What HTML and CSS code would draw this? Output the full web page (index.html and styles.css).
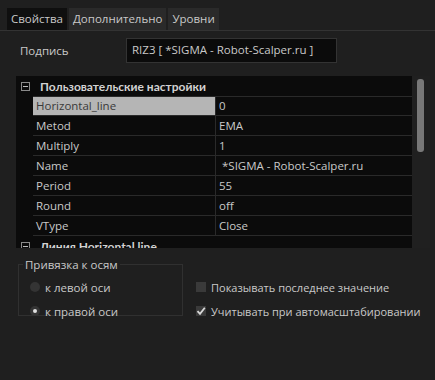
FILE: index.html
```html
<!DOCTYPE html>
<html lang="ru">
<head>
  <meta charset="UTF-8">
  <title>Свойства</title>
  <link rel="stylesheet" href="styles.css">
</head>
<body>
  <div class="tabs">
    <div class="tab active">Свойства</div>
    <div class="tab">Дополнительно</div>
    <div class="tab">Уровни</div>
  </div>

  <div class="caption">
    <label>Подпись</label>
    <div class="field">RIZ3 [ *SIGMA - Robot-Scalper.ru ]</div>
  </div>

  <div class="grid">
    <div class="rows">
      <div class="group"><span class="toggle"></span>Пользовательские настройки</div>
      <div class="row selected"><span class="name">Horizontal_line</span><span class="value">0</span></div>
      <div class="row"><span class="name">Metod</span><span class="value">EMA</span></div>
      <div class="row"><span class="name">Multiply</span><span class="value">1</span></div>
      <div class="row"><span class="name">Name</span><span class="value">&nbsp;*SIGMA - Robot-Scalper.ru</span></div>
      <div class="row"><span class="name">Period</span><span class="value">55</span></div>
      <div class="row"><span class="name">Round</span><span class="value">off</span></div>
      <div class="row"><span class="name">VType</span><span class="value">Close</span></div>
      <div class="group"><span class="toggle"></span>Линия Horizontal line</div>
    </div>
    <div class="scroll"><div class="thumb"></div></div>
  </div>

  <div class="bottom">
    <fieldset class="axes">
      <legend>Привязка к осям</legend>
      <div class="radio"><span class="dot"></span>к левой оси</div>
      <div class="radio"><span class="dot on"></span>к правой оси</div>
    </fieldset>
    <div class="checks">
      <div class="check"><span class="box"></span>Показывать последнее значение</div>
      <div class="check"><span class="box"><svg width="10" height="10" viewBox="0 0 10 10"><path d="M1.5 5.2 L4 7.8 L8.8 1.8" fill="none" stroke="#d8d8d8" stroke-width="1.8"/></svg></span>Учитывать при автомасштабировании</div>
    </div>
  </div>
</body>
</html>
```

FILE: styles.css
```css
body {
  margin: 0;
  width: 435px;
  height: 380px;
  overflow: hidden;
  background: #1f1f1f;
  color: #c9c9c9;
  font-family: 'Open Sans', 'Noto Sans', sans-serif;
  font-size: 11.5px;
}
.tabs {
  display: flex;
  gap: 2px;
  padding: 8px 0 0 7px;
  border-bottom: 1px solid #333;
  height: 22px;
}
.tab {
  height: 22px;
  line-height: 21px;
  padding: 0 4px;
  background: #2a2a2a;
}
.tab.active {
  background: #0f0f0f;
}
.caption {
  display: flex;
  align-items: center;
  padding: 7px 0 0 20px;
}
.caption label {
  width: 106px;
}
.field {
  width: 204px;
  height: 23px;
  line-height: 22px;
  padding-left: 5px;
  background: #0b0b0b;
  border: 1px solid #333;
  white-space: nowrap;
}
.grid {
  display: flex;
  margin: 13px 5px 0 16px;
  height: 172px;
  background: #0b0b0b;
}
.rows {
  flex: 1;
  overflow: hidden;
}
.group {
  display: flex;
  align-items: center;
  height: 20px;
  font-family: Lato, sans-serif;
  font-size: 12px;
  font-weight: bold;
  color: #d2d2d2;
}
.toggle {
  width: 7px;
  height: 7px;
  border: 1px solid #8a8a8a;
  margin: 0 10px 0 5px;
  position: relative;
}
.toggle::after {
  content: '';
  position: absolute;
  left: 1px;
  top: 3px;
  width: 5px;
  height: 1px;
  background: #bbb;
}
.row {
  display: grid;
  grid-template-columns: 183px 1fr;
  box-sizing: border-box;
  height: 20px;
  line-height: 19px;
  margin-left: 17px;
  border-bottom: 1px solid #2a2a2a;
}
.group + .row {
  border-top: 1px solid #2a2a2a;
  line-height: 18px;
}
.name {
  padding-left: 3px;
  border-right: 1px solid #2a2a2a;
}
.value {
  padding-left: 3px;
  white-space: nowrap;
}
.row.selected .name {
  background: #b5b5b5;
  color: #3a3a3a;
}
.scroll {
  width: 18px;
  background: #202020;
  padding-top: 3px;
}
.thumb {
  width: 7px;
  height: 73px;
  margin-left: 5px;
  border-radius: 3px;
  background: #787878;
}
.bottom {
  display: flex;
  padding: 9px 0 0 18px;
}
.axes {
  width: 152px;
  height: 54px;
  margin: 0;
  padding: 3px 0 0 11px;
  border: 1px solid #303030;
  box-sizing: content-box;
}
.axes legend {
  padding: 0 2px;
  margin-left: -7px;
}
.radio {
  display: flex;
  align-items: center;
  height: 24px;
}
.dot {
  width: 10px;
  height: 10px;
  border-radius: 50%;
  background: #343434;
  margin-right: 5px;
  position: relative;
}
.dot.on::after {
  content: '';
  position: absolute;
  left: 3px;
  top: 3px;
  width: 4px;
  height: 4px;
  border-radius: 50%;
  background: #e0e0e0;
}
.checks {
  padding: 18px 0 0 13px;
  font-size: 11px;
}
.check {
  display: flex;
  align-items: center;
  height: 24px;
  white-space: nowrap;
}
.box {
  width: 10px;
  height: 10px;
  background: #3a3a3a;
  margin-right: 5px;
  display: flex;
}
```
